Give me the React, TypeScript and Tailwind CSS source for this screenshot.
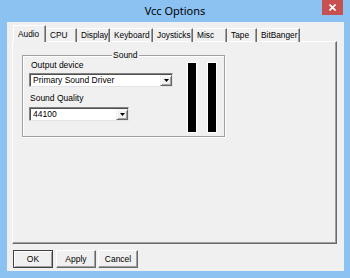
import React from "react";

function Arrow() {
  return (
    <svg width="5" height="3" viewBox="0 0 5 3">
      <path d="M0 0H5L2.5 3Z" fill="#000" />
    </svg>
  );
}

function Combo({ w, text }: { w: string; text: string }) {
  return (
    <div
      className={`${w} h-[14px] flex bg-white border border-t-[#828282] border-l-[#828282] border-b-[#e3e3e3] border-r-[#e3e3e3] shadow-[inset_1px_1px_0_#505050]`}
    >
      <div className="flex-1 pl-[3px] pt-px text-[8.5px] leading-[11px] text-black whitespace-nowrap overflow-hidden">
        {text}
      </div>
      <div className="w-[12px] mt-px flex items-center justify-center bg-[#f0f0f0] border border-t-[#f0f0f0] border-l-[#f0f0f0] border-r-[#696969] border-b-[#696969] shadow-[inset_1px_1px_0_#fff,inset_-1px_-1px_0_#a0a0a0]">
        <Arrow />
      </div>
    </div>
  );
}

const tabs = [
  { label: "CPU", cls: "w-[31px]" },
  { label: "Display", cls: "w-[33px]" },
  { label: "Keyboard", cls: "w-[43px]" },
  { label: "Joysticks", cls: "w-[40px]" },
  { label: "Misc", cls: "w-[34px]" },
  { label: "Tape", cls: "w-[30px]" },
  { label: "BitBanger", cls: "w-[43px]" },
];

export default function App() {
  return (
    <div className="w-[350px] h-[278px] bg-[#8cc2f2] flex flex-col font-['Liberation_Sans',Arial,sans-serif] text-black overflow-hidden">
      {/* Title bar */}
      <div className="relative h-[22px] flex items-center justify-center">
        <span className="font-['Noto_Sans',sans-serif] text-[11px] leading-[14px] text-black -mt-[1px]">
          Vcc Options
        </span>
        <div className="absolute top-0 right-[7px] w-[21px] h-[15px] bg-[#c75050] flex items-center justify-center">
          <svg width="7" height="7" viewBox="0 0 7 7">
            <path d="M0.5 0.5L6.5 6.5M6.5 0.5L0.5 6.5" stroke="#fff" strokeWidth="1.6" />
          </svg>
        </div>
      </div>

      {/* Client area */}
      <div className="flex-1 ml-[7px] mr-[6px] mb-[7px] bg-[#f0f0f0] flex flex-col px-[5px] pt-[3px]">
        {/* Tabs */}
        <div className="relative z-10 flex items-end h-[17px] -mb-px ml-px text-[8.3px]">
          <div className="w-[33px] h-[17px] bg-[#f0f0f0] border-t border-l border-t-white border-l-white border-r border-r-[#696969] shadow-[inset_-1px_0_0_#a0a0a0] pl-[4px] leading-[14px] pt-px">
            Audio
          </div>
          {tabs.map((t) => (
            <div
              key={t.label}
              className={`${t.cls} h-[14px] border-t border-t-white border-r border-r-[#696969] shadow-[inset_-1px_0_0_#a0a0a0] pl-[4px] leading-[13px] whitespace-nowrap`}
            >
              {t.label}
            </div>
          ))}
        </div>

        {/* Panel */}
        <div className="w-[325px] h-[203px] border border-t-white border-l-white border-r-[#696969] border-b-[#696969] shadow-[inset_-1px_-1px_0_#a0a0a0] pl-[9px] pt-[13px]">
          <div className="relative w-[203px] h-[82px] border border-[#a0a0a0] shadow-[inset_1px_1px_0_#fff,1px_1px_0_#fff] flex pl-[6px]">
            <span className="absolute left-[89px] -top-[6px] px-px bg-[#f0f0f0] text-[8.5px] leading-[10px]">
              Sound
            </span>
            <div className="w-[144px] flex flex-col">
              <div className="mt-[4px] h-[10px] pl-[2px] text-[8.5px] leading-[10px]">Output device</div>
              <div className="mt-[3px]">
                <Combo w="w-[144px]" text="Primary Sound Driver" />
              </div>
              <div className="mt-[6px] h-[10px] pl-px text-[8.5px] leading-[10px]">Sound Quality</div>
              <div className="mt-[4px]">
                <Combo w="w-[100px]" text="44100" />
              </div>
            </div>
            <div className="ml-[14px] mt-[6px] flex gap-[10px]">
              <div className="w-[10px] h-[71px] bg-black border border-white" />
              <div className="w-[10px] h-[71px] bg-black border border-white" />
            </div>
          </div>
        </div>

        {/* Buttons */}
        <div className="flex mt-[6px] ml-px text-[8.5px]">
          <button className="w-[40px] h-[18px] bg-[#f0f0f0] border border-[#404040] shadow-[inset_1px_1px_0_#fff,inset_-1px_-1px_0_#a0a0a0] leading-[14px]">
            OK
          </button>
          <button className="ml-[3px] w-[40px] h-[18px] bg-[#f0f0f0] border border-t-white border-l-white border-r-[#696969] border-b-[#696969] shadow-[inset_-1px_-1px_0_#a0a0a0] leading-[14px]">
            Apply
          </button>
          <button className="ml-[2px] w-[40px] h-[18px] bg-[#f0f0f0] border border-t-white border-l-white border-r-[#696969] border-b-[#696969] shadow-[inset_-1px_-1px_0_#a0a0a0] leading-[14px]">
            Cancel
          </button>
        </div>
      </div>
    </div>
  );
}
